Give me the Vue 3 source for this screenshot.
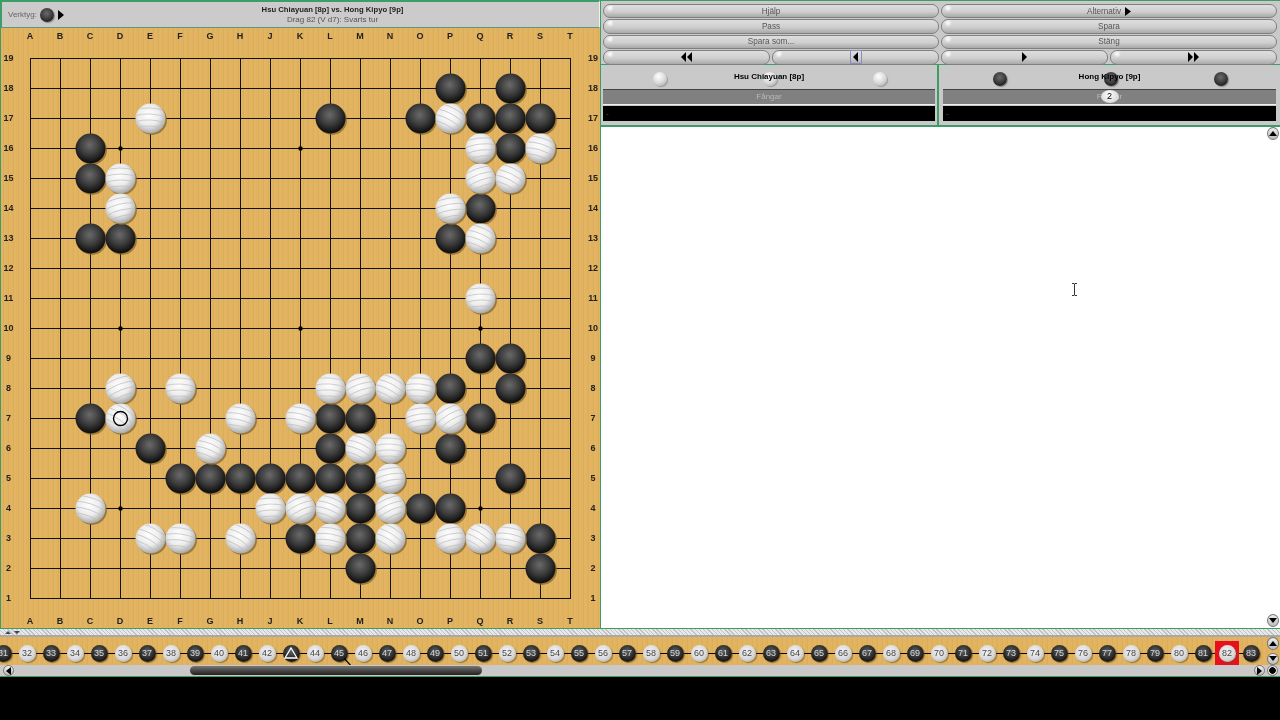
<script setup>
const cols = 'ABCDEFGHJKLMNOPQRST'.split('')
const cx = (c) => 30 + 30 * cols.indexOf(c)
const cy = (r) => 58 + 30 * (19 - r)
const lines = Array.from({ length: 19 }, (_, i) => i)
const hoshi = [['D',16],['K',16],['Q',16],['D',10],['K',10],['Q',10],['D',4],['K',4],['Q',4]]
const layout = {
  b: 'P18 R18 L17 O17 Q17 R17 S17 C16 R16 C15 Q14 C13 D13 P13 Q9 R9 P8 R8 C7 L7 M7 Q7 E6 L6 P6 F5 G5 H5 J5 K5 L5 M5 R5 M4 O4 P4 K3 M3 S3 M2 S2',
  w: 'E17 P17 Q16 S16 D15 Q15 R15 D14 P14 Q13 Q11 D8 F8 L8 M8 N8 O8 D7 H7 K7 O7 P7 G6 M6 N6 N5 C4 J4 K4 L4 N4 E3 F3 H3 L3 N3 P3 Q3 R3'
}
const parse = (s) => s.split(' ').map((t) => ({ x: cx(t[0]), y: cy(+t.slice(1)), a: ((t.charCodeAt(0) * 47 + +t.slice(1) * 83) % 70) - 35 }))
const black = parse(layout.b)
const white = parse(layout.w)
const moves = Array.from({ length: 53 }, (_, i) => 31 + i)
</script>

<template>
  <div class="app">
    <svg class="defs" width="0" height="0">
      <defs>
        <radialGradient id="bg" cx="47%" cy="38%" r="64%">
          <stop offset="0" stop-color="#6a6a6a" /><stop offset=".5" stop-color="#3c3c3c" /><stop offset=".85" stop-color="#161616" /><stop offset="1" stop-color="#080808" />
        </radialGradient>
        <radialGradient id="wg" cx="44%" cy="38%" r="64%">
          <stop offset="0" stop-color="#ffffff" /><stop offset=".55" stop-color="#ececec" /><stop offset="1" stop-color="#a4a4a4" />
        </radialGradient>
        <clipPath id="sc"><circle r="14.5" /></clipPath>
      </defs>
    </svg>

    <div class="main">
      <section class="left">
        <header class="head">
          <div class="tools">
            <span>Verktyg:</span>
            <i class="mini black"></i>
            <svg width="6" height="10" viewBox="0 0 6 10"><path d="M0 0L6 5L0 10Z" fill="#000" /></svg>
          </div>
          <div class="title">
            <b>Hsu Chiayuan [8p] vs. Hong Kipyo [9p]</b>
            <span>Drag 82 (V d7): Svarts tur</span>
          </div>
        </header>
        <div class="board">
          <svg width="600" height="600" viewBox="0 28 600 600">
            <g stroke="#111" stroke-width="1" shape-rendering="crispEdges">
              <line v-for="i in lines" :key="'v' + i" :x1="30.5 + 30 * i" y1="58" :x2="30.5 + 30 * i" y2="598" />
              <line v-for="i in lines" :key="'h' + i" x1="30" :y1="58.5 + 30 * i" x2="571" :y2="58.5 + 30 * i" />
            </g>
            <circle v-for="h in hoshi" :key="h[0] + h[1]" :cx="cx(h[0]) + .5" :cy="cy(h[1]) + .5" r="2.2" fill="#000" />
            <g class="lab">
              <template v-for="(c, i) in cols" :key="c">
                <text :x="30 + 30 * i" y="39">{{ c }}</text>
                <text :x="30 + 30 * i" y="624">{{ c }}</text>
              </template>
              <template v-for="i in lines" :key="'n' + i">
                <text x="8.5" :y="61 + 30 * i">{{ 19 - i }}</text>
                <text x="593" :y="61 + 30 * i">{{ 19 - i }}</text>
              </template>
            </g>
            <g v-for="(s, i) in black" :key="'b' + i" :transform="`translate(${s.x + .5} ${s.y + .5})`">
              <circle cx="1.5" cy="1.5" r="15" fill="#8a6a30" opacity=".8" />
              <circle r="15" fill="url(#bg)" />
            </g>
            <g v-for="(s, i) in white" :key="'w' + i" :transform="`translate(${s.x + .5} ${s.y + .5})`">
              <circle cx="1.5" cy="1.5" r="15" fill="#8a6a30" opacity=".8" />
              <circle r="15" fill="url(#wg)" />
              <g clip-path="url(#sc)">
                <g :transform="`rotate(${s.a})`" fill="none" stroke="#bdbdbd" stroke-width=".7">
                  <path d="M-16 -9Q0 -13 16 -7" /><path d="M-16 -3Q0 -7 16 -1" /><path d="M-16 3Q0 -1 16 5" />
                  <path d="M-16 9Q0 5 16 11" />
                </g>
              </g>
            </g>
            <circle cx="120.5" cy="418.5" r="7" fill="none" stroke="#000" stroke-width="1.4" />
          </svg>
        </div>
      </section>

      <section class="right">
        <div class="btns">
          <button class="wide">Hjälp</button>
          <button class="wide">Alternativ <svg width="6" height="9" viewBox="0 0 6 9"><path d="M0 0L6 4.5L0 9Z" fill="#000" /></svg></button>
          <button class="wide">Pass</button>
          <button class="wide">Spara</button>
          <button class="wide">Spara som...</button>
          <button class="wide">Stäng</button>
          <button><svg width="11" height="10" viewBox="0 0 11 10"><path d="M5 0L0 5L5 10ZM11 0L6 5L11 10Z" fill="#000" /></svg></button>
          <button><span class="focus"><svg width="5" height="10" viewBox="0 0 5 10"><path d="M5 0L0 5L5 10Z" fill="#000" /></svg></span></button>
          <button><svg width="5" height="10" viewBox="0 0 5 10"><path d="M0 0L5 5L0 10Z" fill="#000" /></svg></button>
          <button><svg width="11" height="10" viewBox="0 0 11 10"><path d="M0 0L5 5L0 10ZM6 0L11 5L6 10Z" fill="#000" /></svg></button>
        </div>
        <div class="players">
          <div class="player">
            <div class="name">
              <i class="mini white"></i><i class="mini white"></i><i class="mini white"></i>
              <b>Hsu Chiayuan [8p]</b>
            </div>
            <div class="bar">Fångar</div>
            <div class="dark">-</div>
          </div>
          <div class="player">
            <div class="name">
              <i class="mini black"></i><i class="mini black"></i><i class="mini black"></i>
              <b>Hong Kipyo [9p]</b>
            </div>
            <div class="bar">Fångar<em class="count">2</em></div>
            <div class="dark">-</div>
          </div>
        </div>
        <div class="text">
          <svg class="ibeam" width="7" height="13" viewBox="0 0 7 13"><path d="M1 .5H3L3.5 1L4 .5H6M3.5 1V12M1 12.5H3L3.5 12L4 12.5H6" fill="none" stroke="#333" /></svg>
          <div class="vbar">
            <span class="sb"><svg width="8" height="5" viewBox="0 0 8 5"><path d="M0 5L4 0L8 5Z" fill="#000" /></svg></span>
            <span class="sb"><svg width="8" height="5" viewBox="0 0 8 5"><path d="M0 0L4 5L8 0Z" fill="#000" /></svg></span>
          </div>
        </div>
      </section>
    </div>

    <div class="split">
      <svg width="20" height="5" viewBox="0 0 20 5"><path d="M2 4L5 1L8 4ZM11 1L14 4L17 1Z" fill="#445" /></svg>
    </div>

    <div class="tree">
      <div class="track">
        <div class="stones">
          <span v-for="n in moves" :key="n" class="node" :class="{ cur: n === 82 }">
            <i class="mv" :class="n % 2 ? 'black' : 'white'">
              <svg v-if="n === 43" width="14" height="12" viewBox="0 0 14 12"><path d="M7 1L13 11H1Z" fill="none" stroke="#fff" stroke-width="1.3" /></svg>
              <template v-else>{{ n }}</template>
            </i>
          </span>
        </div>
        <svg class="branch" width="10" height="10" viewBox="0 0 10 10"><path d="M0 0L8 9" stroke="#000" stroke-width="1.2" /></svg>
        <div class="vbtns">
          <span class="sb"><svg width="8" height="5" viewBox="0 0 8 5"><path d="M0 5L4 0L8 5Z" fill="#000" /></svg></span>
          <span class="sb"><svg width="8" height="5" viewBox="0 0 8 5"><path d="M0 0L4 5L8 0Z" fill="#000" /></svg></span>
        </div>
      </div>
      <div class="hbar">
        <span class="hb left-b"><svg width="5" height="8" viewBox="0 0 5 8"><path d="M5 0L0 4L5 8Z" fill="#000" /></svg></span>
        <div class="htrack"><span class="thumb"></span></div>
        <span class="hb"><svg width="5" height="8" viewBox="0 0 5 8"><path d="M0 0L5 4L0 8Z" fill="#000" /></svg></span>
        <span class="hb dot"></span>
      </div>
    </div>
  </div>
</template>

<style scoped>
.app {
  width: 1280px;
  height: 720px;
  background: #000;
  overflow: hidden;
  font-family: "Liberation Sans", Arial, sans-serif;
  font-size: 8px;
  color: #444;
  filter: blur(0.35px);
}
.defs { position: absolute; }
.main { display: flex; height: 628px; background: #c9c9c9; }
.left { width: 600px; display: flex; flex-direction: column; }
.head {
  height: 28px;
  box-sizing: border-box;
  display: flex;
  align-items: center;
  background: #cbcbcb;
  border-right: 1px solid #f0f0f0;
  border-top: 2px solid #3c9d68;
  border-bottom: 1px solid #5a9a78;
  border-left: 2px solid #3c9d68;
}
.tools { width: 64px; display: flex; align-items: center; padding-left: 6px; box-sizing: border-box; gap: 3px; color: #666; flex: none; font-size: 8px; }
.tools svg { flex: none; margin-left: 1px; }
.title { flex: 1; display: flex; flex-direction: column; align-items: center; line-height: 10px; }
.title b { color: #222; font-size: 7.7px; }
.title span { color: #555; }
.mini {
  flex: none;
  display: block;
  width: 14px;
  height: 14px;
  border-radius: 50%;
}
.mini.black { background: radial-gradient(circle at 47% 38%, #6a6a6a, #3c3c3c 50%, #080808 92%); box-shadow: 1px 1px 1px #888; }
.mini.white { background: radial-gradient(circle at 40% 32%, #fff, #d6d6d6 55%, #9e9e9e 95%); box-shadow: 1px 1px 1px #999; }
.board {
  height: 600px;
  background: repeating-linear-gradient(90deg, #e1b25f 0 2px, #ddae5a 2px 3px, #e3b562 3px 5px);
  border-left: 1px solid #3c9d68;
  box-sizing: border-box;
  overflow: hidden;
}
.board svg { display: block; margin-left: -1px; }
.lab text { font: bold 9px "Liberation Sans", Arial, sans-serif; fill: #222; text-anchor: middle; }

.right { flex: 1; display: flex; flex-direction: column; border-left: 1px solid #3c9d68; min-width: 0; }
.btns {
  height: 65px;
  box-sizing: border-box;
  padding: 3px 3px 0 2px;
  display: grid;
  grid-template-columns: repeat(4, 1fr);
  grid-auto-rows: 14.4px;
  gap: 1px 2px;
  border-top: 1px solid #3c9d68;
  border-bottom: 1px solid #3c9d68;
}
button {
  font: 8.2px "Liberation Sans", Arial, sans-serif;
  color: #555;
  border: 1px solid #808080;
  border-radius: 7px;
  padding: 0;
  display: flex;
  align-items: center;
  justify-content: center;
  gap: 4px;
  background: radial-gradient(circle at 6px 3px, #fff 0, rgba(255,255,255,0) 4px), linear-gradient(#dedede, #cfcfcf 55%, #a9a9a9);
}
.wide { grid-column: span 2; }
.focus { display: flex; align-items: center; justify-content: center; width: 10px; height: 12px; border: 1px solid #8c8cb8; }
.players {
  height: 62px;
  display: grid;
  grid-template-columns: 338px 1fr;
  border-bottom: 2px solid #3c9d68;
  box-sizing: border-box;
}
.player { padding: 1px 2px 0; box-sizing: border-box; }
.player:first-child { border-right: 2px solid #3c9d68; }
.player:last-child { padding: 1px 4px 0 4px; }
.name {
  height: 23px;
  box-sizing: border-box;
  padding: 3px 48px 0 50px;
  position: relative;
  display: flex;
  align-items: center;
  justify-content: space-between;
}
.name b { position: absolute; left: 0; right: 0; top: 6px; text-align: center; color: #000; line-height: 10px; }
.bar {
  position: relative;
  height: 16px;
  line-height: 14px;
  background: #808080;
  color: #b8b8b8;
  text-align: center;
  border-top: 1px solid #444;
  border-bottom: 1px solid #f0f0f0;
  box-sizing: border-box;
}
.dark {
  height: 15px;
  margin-top: 1px;
  padding-left: 3px;
  line-height: 16px;
  background: #000;
  color: #555;
}
.count {
  position: absolute;
  left: 50%;
  top: 0;
  width: 18px;
  height: 13px;
  margin-left: -9px;
  border-radius: 50%;
  line-height: 13px;
  font-style: normal;
  font-size: 9px;
  color: #000;
  background: radial-gradient(circle at 45% 35%, #fff, #c8c8c8);
}
.text { flex: 1; background: #fff; position: relative; display: flex; justify-content: flex-end; }
.ibeam { position: absolute; left: 470px; top: 156px; }
.vbar { width: 15px; display: flex; flex-direction: column; justify-content: space-between; align-items: center; padding: 0 0 1px; }
.sb {
  width: 12px;
  height: 13px;
  border-radius: 50%;
  border: 1px solid #777;
  box-sizing: border-box;
  display: flex;
  align-items: center;
  justify-content: center;
  background: linear-gradient(#eee, #bbb);
}

.split {
  height: 9px;
  box-sizing: border-box;
  border-top: 1px solid #3c9d68;
  padding: 1px 0 0 3px;
  background:
    repeating-linear-gradient(45deg, rgba(120,120,120,.35) 0 1px, transparent 1px 3px) 0 0 / 100% 6px no-repeat,
    linear-gradient(#e8e8e8 0 6px, #a8a8a8 6px);
  display: flex;
  align-items: flex-start;
}
.tree { height: 40px; display: flex; flex-direction: column; }
.track {
  height: 28px;
  position: relative;
  overflow: hidden;
  background: repeating-linear-gradient(90deg, #e1b25f 0 2px, #ddae5a 2px 3px, #e3b562 3px 5px);
}
.stones {
  position: relative;
  display: flex;
  margin-left: -9px;
  height: 28px;
  align-items: center;
}
.stones::before {
  content: "";
  position: absolute;
  left: 0;
  width: 1268px;
  top: 15.5px;
  height: 1px;
  background: #000;
}
.node {
  position: relative;
  flex: none;
  width: 24px;
  height: 24px;
  display: flex;
  align-items: center;
  justify-content: center;
  margin-top: 4px;
}
.cur { background: #e8101c; }
.mv {
  width: 17px;
  height: 17px;
  border-radius: 50%;
  display: flex;
  align-items: center;
  justify-content: center;
  font-style: normal;
  font-size: 9px;
  box-shadow: 1px 1px 1px rgba(110, 80, 30, .7);
}
.mv.black { color: #d8d8d8; background: radial-gradient(circle at 47% 38%, #606060, #2c2c2c 50%, #040404 90%); }
.mv.white { color: #444; background: radial-gradient(circle at 44% 38%, #f4f4f4, #d8d8d8 55%, #949494 98%); }
.branch { position: absolute; left: 344px; top: 21px; }
.vbtns {
  position: absolute;
  right: 1px;
  top: 0;
  height: 28px;
  display: flex;
  flex-direction: column;
  justify-content: center;
  gap: 3px;
}
.hbar { height: 12px; display: flex; align-items: center; background: #c9c9c9; border-bottom: 1px solid #3c9d68; box-sizing: border-box; }
.hb {
  flex: none;
  width: 11px;
  height: 11px;
  border-radius: 50%;
  border: 1px solid #777;
  box-sizing: border-box;
  display: flex;
  align-items: center;
  justify-content: center;
  background: linear-gradient(#eee, #bbb);
}
.left-b { margin-left: 3px; }
.htrack { flex: 1; height: 11px; display: flex; align-items: center; padding-left: 176px; }
.thumb {
  width: 292px;
  height: 9px;
  border-radius: 5px;
  background: linear-gradient(#7a7a7a, #4c4c4c 45%, #222);
}
.dot { margin: 0 2px; background: radial-gradient(circle, #000 0 3px, #ddd 3.5px); }
</style>

<style>
html, body { margin: 0; background: #000; }
</style>
